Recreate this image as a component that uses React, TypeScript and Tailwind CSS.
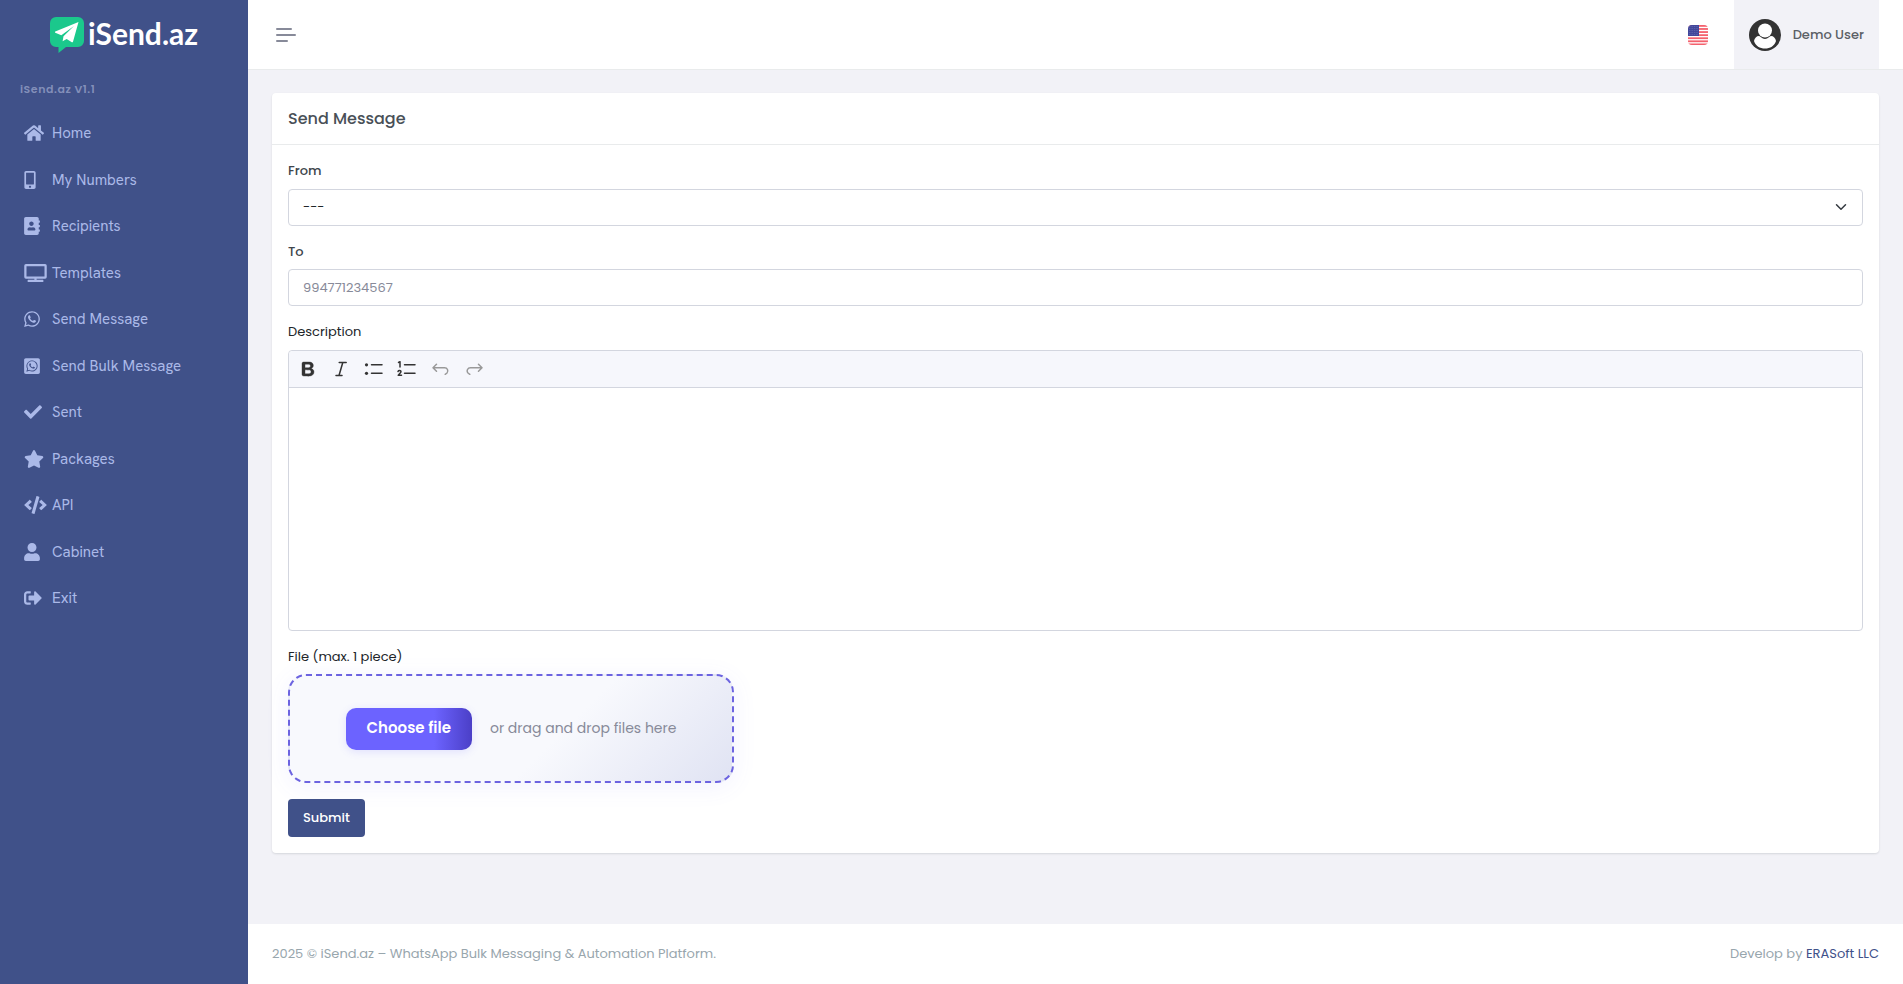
import { FaHome, FaMobileAlt, FaAddressBook, FaTv, FaWhatsapp, FaWhatsappSquare, FaCheck, FaStar, FaCode, FaUser, FaSignOutAlt } from "react-icons/fa";
import type { IconType } from "react-icons";
import type { ReactNode } from "react";

const menu: { label: string; Icon: IconType; width: string }[] = [
  { label: "Home", Icon: FaHome, width: "w-5" },
  { label: "My Numbers", Icon: FaMobileAlt, width: "w-3" },
  { label: "Recipients", Icon: FaAddressBook, width: "w-4" },
  { label: "Templates", Icon: FaTv, width: "w-[23px]" },
  { label: "Send Message", Icon: FaWhatsapp, width: "w-4" },
  { label: "Send Bulk Message", Icon: FaWhatsappSquare, width: "w-4" },
  { label: "Sent", Icon: FaCheck, width: "w-[18px]" },
  { label: "Packages", Icon: FaStar, width: "w-5" },
  { label: "API", Icon: FaCode, width: "w-[23px]" },
  { label: "Cabinet", Icon: FaUser, width: "w-4" },
  { label: "Exit", Icon: FaSignOutAlt, width: "w-[18px]" },
];

function Logo() {
  return (
    <a href="#" className="flex h-[70px] items-center justify-center gap-1 text-white">
      <svg viewBox="0 0 34 36" className="h-9 w-[34px]">
        <path fill="#1bc88c" d="M6 0h22a6 6 0 0 1 6 6v18a6 6 0 0 1-6 6H16l-7.500 6V30H6a6 6 0 0 1-6-6V6a6 6 0 0 1 6-6z" />
        <path fill="#fff" d="M28.500 5 5.300 14.600c-.5.300-.5 1 0 1.200l6 2.400L24 9 13.500 19.300 12.600 24.200 16.700 22l5.100 3.200c.5.300 1 .1 1.200-.5z" />
      </svg>
      <span className="pb-1 font-['Lato',sans-serif] text-[30px] leading-none font-bold">iSend.az</span>
    </a>
  );
}

function Sidebar() {
  return (
    <aside className="w-[248px] shrink-0 bg-[#405189]">
      <Logo />
      <p className="px-5 pt-2 pb-2.5 text-[11px] leading-[22px] font-semibold tracking-wider text-[#838fb9]">iSend.az V1.1</p>
      <nav>
        <ul>
          {menu.map(({ label, Icon, width }) => (
            <li key={label}>
              <a href="#" className="flex items-center px-6 py-3 font-['HKGrotesk','HK_Grotesk','Hanken_Grotesk','Roboto',sans-serif] text-[15px] leading-normal text-[#abb9e8]">
                <span className="w-7 shrink-0">
                  <Icon className={`h-[18px] ${width}`} />
                </span>
                {label}
              </a>
            </li>
          ))}
        </ul>
      </nav>
    </aside>
  );
}

function Flag() {
  return (
    <svg viewBox="0 0 20 20" className="size-5 overflow-hidden rounded">
      <rect width="20" height="20" fill="#fff" />
      {[0, 1, 2, 3, 4, 5, 6].map((i) => (
        <rect key={i} y={i * 3.08} width="20" height="1.800" fill="#f4616d" />
      ))}
      <rect width="11" height="11" fill="#41479b" />
      {[1, 3, 5, 7, 9].map((y) => (
        <path key={y} d={`M1 ${y + 0.500}h9`} stroke="#8a8ec5" strokeWidth="0.500" strokeDasharray="0.700 1" />
      ))}
    </svg>
  );
}

function Header() {
  return (
    <header className="flex h-[70px] items-center justify-between border-b border-[#e9ebec] bg-white pr-6 pl-7">
      <button type="button" aria-label="Toggle menu" className="flex flex-col items-start gap-1">
        <span className="h-0.5 w-4 rounded bg-[#878a99]" />
        <span className="h-0.5 w-5 rounded bg-[#878a99]" />
        <span className="h-0.5 w-3 rounded bg-[#878a99]" />
      </button>
      <div className="flex h-full items-center gap-[26px]">
        <button type="button" aria-label="Language">
          <Flag />
        </button>
        <button type="button" className="flex h-full items-center gap-3 bg-[#f2f2f7] px-[15px] text-[13px] font-medium text-[#5b6066]">
          <svg viewBox="0 0 32 32" className="size-8">
            <circle cx="16" cy="16" r="16" fill="#333" />
            <path fill="#fff" d="M5 22c.5-3 2.500-5 5-5 1.500 0 3 3 6 3s4.500-3 6-3c2.500 0 4.500 2 5 5-1.500 5-6 7.500-11 7.500S6.500 27 5 22z" />
            <circle cx="16" cy="11.500" r="7" fill="#fff" />
          </svg>
          Demo User
        </button>
      </div>
    </header>
  );
}

const editorTools: { label: string; muted?: boolean; shape: ReactNode }[] = [
  { label: "Bold", shape: <path fill="currentColor" stroke="currentColor" strokeWidth="0.400" d="M10.187 17H5.773c-.637 0-1.092-.138-1.364-.415-.273-.277-.409-.718-.409-1.323V4.738c0-.617.140-1.062.419-1.332.279-.270.730-.406 1.354-.406h4.680c.690 0 1.288.041 1.793.124.506.083.960.242 1.360.478.341.197.644.447.906.750a3.262 3.262 0 0 1 .808 2.162c0 1.401-.722 2.426-2.167 3.075C15.050 10.175 16 11.315 16 13.010a3.756 3.756 0 0 1-2.296 3.504 6.100 6.100 0 0 1-1.517.377c-.571.073-1.238.110-2 .110zm-.217-6.217H7v4.087h3.069c1.977 0 2.965-.690 2.965-2.072 0-.707-.256-1.220-.768-1.537-.512-.319-1.277-.478-2.296-.478zM7 5.130v3.619h2.606c.729 0 1.292-.067 1.690-.200a1.600 1.600 0 0 0 .910-.765c.165-.267.247-.566.247-.897 0-.707-.260-1.176-.778-1.409-.519-.232-1.310-.348-2.375-.348H7z" /> },
  { label: "Italic", shape: <path d="M8.200 3.500h7M5 16.500h6M11.800 3.500 8 16.500" /> },
  { label: "Bulleted List", shape: <><path d="M7.500 5.800h10.500M7.500 14.300h10.500" /><circle cx="2.500" cy="5.800" r="1.600" fill="currentColor" stroke="none" /><circle cx="2.500" cy="14.300" r="1.600" fill="currentColor" stroke="none" /></> },
  { label: "Numbered List", shape: <><path d="M7.500 5.800h10.500M7.500 14.300h10.500" /><path d="M1.500 3.500l1.500-.800V8M1 12.500c.500-1.300 3-1.200 3 .200 0 1-2.500 2.600-2.800 3.600H4.500" /></> },
  { label: "Undo", muted: true, shape: <path d="M6.500 5.200 3 8.700l3.500 3.500M3.200 8.700h11.300a3.200 3.200 0 0 1 2.500 5.300l-1.800 1.300" /> },
  { label: "Redo", muted: true, shape: <path d="M15.500 5.200 19 8.700l-3.500 3.500M18.800 8.700H7.500A3.200 3.200 0 0 0 5 14l1.800 1.300" /> },
];

function Editor() {
  return (
    <div className="mt-2 rounded border border-[#d3d6df]">
      <div className="flex h-[37px] items-center gap-[13px] rounded-t border-b border-[#d3d6df] bg-[#f6f7fc] pl-[9px]">
        {editorTools.map(({ label, muted, shape }) => (
          <button key={label} type="button" aria-label={label} className={muted ? "text-[#999]" : "text-[#333]"}>
            <svg viewBox="0 0 20 20" className="size-5" fill="none" stroke="currentColor" strokeWidth="1.500" strokeLinecap="round" strokeLinejoin="round">
              {shape}
            </svg>
          </button>
        ))}
      </div>
      <textarea aria-labelledby="description-label" className="block h-[242px] w-full resize-none px-3 py-2 outline-none" />
    </div>
  );
}

const control = "mt-2 block h-[37px] w-full rounded border border-[#d3d6df] bg-white px-3.5 text-[13px]";

function MessageForm() {
  return (
    <section className="rounded bg-white shadow-[0_1px_2px_rgba(56,65,74,0.15)]">
      <h1 className="border-b border-[#e9ebec] px-4 py-4 text-[16px] leading-[19px] font-medium text-[#495057]">Send Message</h1>
      <form className="p-4 text-[13px] leading-normal text-[#212529]" onSubmit={(e) => e.preventDefault()}>
        <label htmlFor="from" className="block font-medium text-[#40464c]">From</label>
        <div className="relative">
          <select id="from" className={`${control} appearance-none text-[#212529]`}>
            <option>---</option>
          </select>
          <svg viewBox="0 0 16 16" className="pointer-events-none absolute top-3 right-4 size-3" fill="none" stroke="#343a40" strokeWidth="2" strokeLinecap="round" strokeLinejoin="round">
            <path d="m2 5 6 6 6-6" />
          </svg>
        </div>
        <label htmlFor="to" className="mt-4 block font-medium text-[#40464c]">To</label>
        <input id="to" placeholder="994771234567" className={`${control} placeholder:text-[#878a99]`} />
        <p id="description-label" className="mt-4">Description</p>
        <Editor />
        <p id="file-label" className="mt-4">File (max. 1 piece)</p>
        <div className="mt-2 flex h-[109px] w-[446px] max-w-full items-center justify-center gap-[18px] rounded-[18px] border-2 border-dashed border-[#6c63e0] bg-[linear-gradient(135deg,#f8f9fd_60%,#e0e3f3)] shadow-[0_4px_24px_rgba(108,99,255,0.08)]">
          <button type="button" className="h-[42px] rounded-[10px] bg-[linear-gradient(90deg,#6c63ff_70%,#4b3fc7)] px-[21px] text-[15px] font-semibold text-white shadow-[0_2px_8px_rgba(108,99,255,0.16)]">Choose file</button>
          <span className="text-[14px] text-[#878a99]">or drag and drop files here</span>
        </div>
        <button type="submit" className="mt-4 block h-[38px] rounded bg-[#405189] px-[15px] text-[13px] font-medium text-white">Submit</button>
      </form>
    </section>
  );
}

export default function App() {
  return (
    <div className="flex min-h-screen bg-[#f2f2f7] font-['Poppins','Inter',sans-serif]">
      <Sidebar />
      <div className="flex min-w-0 flex-1 flex-col">
        <Header />
        <main className="flex-1 px-6 pt-[23px] pb-6">
          <MessageForm />
        </main>
        <footer className="flex h-[60px] items-center justify-between bg-white px-6 text-[13px] text-[#98a6ad]">
          <span>2025 © iSend.az – WhatsApp Bulk Messaging &amp; Automation Platform.</span>
          <span>
            Develop by <a href="#" className="text-[#405189]">ERASoft LLC</a>
          </span>
        </footer>
      </div>
    </div>
  );
}
